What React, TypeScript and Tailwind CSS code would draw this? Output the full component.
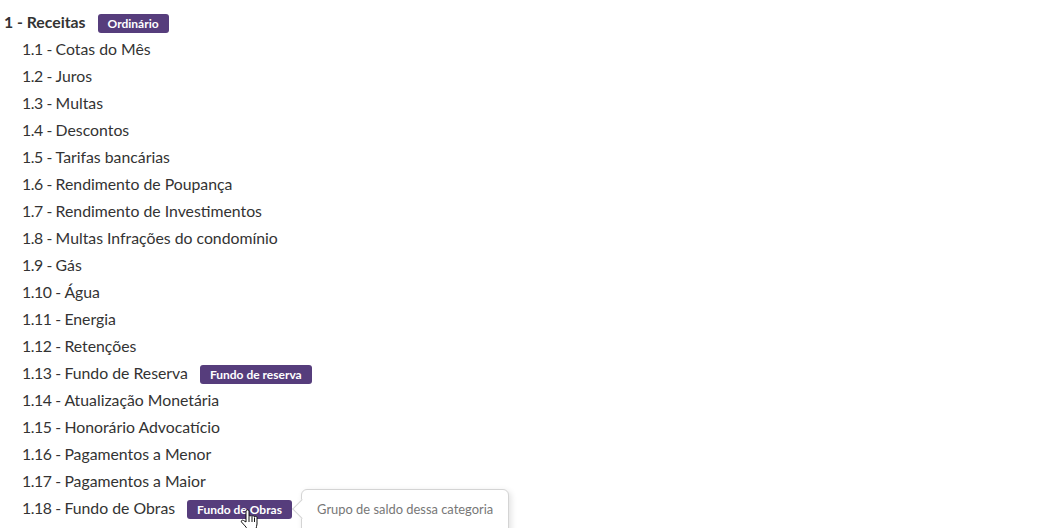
const items: [string, string, string?][] = [
  ["1.1 - ", "Cotas do Mês"],
  ["1.2 - ", "Juros"],
  ["1.3 - ", "Multas"],
  ["1.4 - ", "Descontos"],
  ["1.5 - ", "Tarifas bancárias"],
  ["1.6 - ", "Rendimento de Poupança"],
  ["1.7 - ", "Rendimento de Investimentos"],
  ["1.8 - ", "Multas Infrações do condomínio"],
  ["1.9 - ", "Gás"],
  ["1.10 - ", "Água"],
  ["1.11 - ", "Energia"],
  ["1.12 - ", "Retenções"],
  ["1.13 - ", "Fundo de Reserva", "Fundo de reserva"],
  ["1.14 - ", "Atualização Monetária"],
  ["1.15 - ", "Honorário Advocatício"],
  ["1.16 - ", "Pagamentos a Menor"],
  ["1.17 - ", "Pagamentos a Maior"],
  ["1.18 - ", "Fundo de Obras", "Fundo de Obras"],
];

function Badge({ children }: { children: React.ReactNode }) {
  return (
    <span className="ml-3 mt-[4px] inline-flex h-[19px] items-center rounded-[3px] bg-[#563d7c] px-[10px] text-[12px] leading-none font-bold text-white">
      {children}
    </span>
  );
}

function HandCursor() {
  return (
    <svg className="absolute left-[65px] top-[13px]" width="20" height="22" viewBox="0 0 20 22">
      <path
        d="M6 2c0-1.500 3-1.500 3 0v5.500c0-1 3-1 3 0c0-1 2.500-1 2.500.5c0-1 2.500-1 2.500.5V15c0 2-1 3-1 5H7c-.5-2-3-4-5.500-7-.7-1 .5-2.500 2-1.500L6 13Z"
        fill="#fff"
        stroke="#111"
        strokeWidth="1"
      />
      <path d="M9 8v5M12 8v5M14.500 8.500v4.500" stroke="#111" strokeWidth="1" fill="none" />
    </svg>
  );
}

export default function App() {
  return (
    <div className="h-[528px] w-[1054px] overflow-hidden bg-white pl-1 pt-[8px] font-['Lato',sans-serif] text-[15.8px] text-[#333333]">
      <div className="flex h-[27px] items-center font-bold">
        <span>1 - Receitas</span>
        <Badge>Ordinário</Badge>
      </div>
      <ul className="pl-[18px]">
        {items.map(([prefix, label, badge]) => (
          <li key={prefix} className="flex h-[27px] items-center">
            <span className="whitespace-pre">
              <span className="tracking-[-0.4px]">{prefix}</span>
              {label}
            </span>
            {badge && (
              <span className="relative flex items-center">
                <Badge>{badge}</Badge>
                {badge === "Fundo de Obras" && (
                  <>
                    <HandCursor />
                    <span className="absolute left-[126px] top-[-7px] flex h-[50px] w-[208px] items-start rounded-[6px] border border-[#d4d4d4] bg-white pl-[15px] pt-[10px] text-[12.9px] text-[#777777] shadow-[2px_2px_6px_rgba(0,0,0,0.12)]">
                      <span className="absolute left-[-7px] top-[12px] size-[14px] rotate-45 border-b border-l border-[#d4d4d4] bg-white" />
                      <span className="relative whitespace-nowrap">Grupo de saldo dessa categoria</span>
                    </span>
                  </>
                )}
              </span>
            )}
          </li>
        ))}
      </ul>
    </div>
  );
}
